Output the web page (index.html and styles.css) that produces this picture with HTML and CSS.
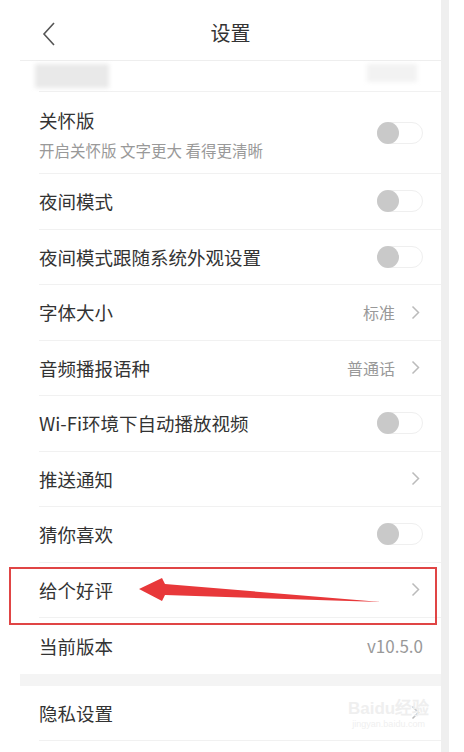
FILE: index.html
```html
<!DOCTYPE html>
<html lang="zh-CN">

<head>
    <meta charset="UTF-8">
    <meta name="viewport" content="width=device-width, initial-scale=1.0">
    <title>设置</title>
    <link rel="stylesheet" href="styles.css">
</head>

<body>
    <div class="frame">
        <div class="screen">
            <div class="header">
                <svg class="back" width="14" height="24" viewBox="0 0 14 24">
                    <path d="M12 1 L2 12 L12 23" fill="none" stroke="#555" stroke-width="1.6" />
                </svg>
                <h1>设置</h1>
            </div>

            <div class="list">
                <div class="row row-hidden">
                    <span class="blur-left"></span>
                    <span class="blur-right"></span>
                </div>

                <div class="row row-tall">
                    <div class="label">
                        <span class="title">关怀版</span>
                        <span class="desc">开启关怀版 文字更大 看得更清晰</span>
                    </div>
                    <span class="switch"></span>
                </div>

                <div class="row">
                    <span class="title">夜间模式</span>
                    <span class="switch"></span>
                </div>

                <div class="row">
                    <span class="title">夜间模式跟随系统外观设置</span>
                    <span class="switch"></span>
                </div>

                <div class="row">
                    <span class="title">字体大小</span>
                    <span class="value">标准 <svg class="arrow" width="9" height="15" viewBox="0 0 9 15"><path d="M1.5 1.5 L7.5 7.5 L1.5 13.5" fill="none" stroke="#bbb" stroke-width="1.5" /></svg></span>
                </div>

                <div class="row">
                    <span class="title">音频播报语种</span>
                    <span class="value">普通话 <svg class="arrow" width="9" height="15" viewBox="0 0 9 15"><path d="M1.5 1.5 L7.5 7.5 L1.5 13.5" fill="none" stroke="#bbb" stroke-width="1.5" /></svg></span>
                </div>

                <div class="row">
                    <span class="title">Wi-Fi环境下自动播放视频</span>
                    <span class="switch"></span>
                </div>

                <div class="row">
                    <span class="title">推送通知</span>
                    <span class="value"><svg class="arrow" width="9" height="15" viewBox="0 0 9 15"><path d="M1.5 1.5 L7.5 7.5 L1.5 13.5" fill="none" stroke="#bbb" stroke-width="1.5" /></svg></span>
                </div>

                <div class="row">
                    <span class="title">猜你喜欢</span>
                    <span class="switch"></span>
                </div>

                <div class="row">
                    <span class="title">给个好评</span>
                    <span class="value"><svg class="arrow" width="9" height="15" viewBox="0 0 9 15"><path d="M1.5 1.5 L7.5 7.5 L1.5 13.5" fill="none" stroke="#bbb" stroke-width="1.5" /></svg></span>
                </div>

                <div class="row row-last">
                    <span class="title">当前版本</span>
                    <span class="version">v10.5.0</span>
                </div>
            </div>

            <div class="gap"></div>

            <div class="list">
                <div class="row">
                    <span class="title">隐私设置</span>
                    <span class="value"><svg class="arrow" width="9" height="15" viewBox="0 0 9 15"><path d="M1.5 1.5 L7.5 7.5 L1.5 13.5" fill="none" stroke="#bbb" stroke-width="1.5" /></svg></span>
                </div>
            </div>
        </div>
        <div class="edge"></div>
    </div>

    <!-- 标注：红框和箭头 -->
    <div class="mark-box"></div>
    <svg class="mark-arrow" width="464" height="752" viewBox="0 0 464 752">
        <polygon points="139,589 162,578 165,584 381,602 165,595 162,601" fill="#e8383a" />
    </svg>

    <div class="watermark">
        <span class="wm-big">Baidu经验</span>
        <span class="wm-small">jingyan.baidu.com</span>
    </div>
</body>
</html>
```

FILE: styles.css
```css
body, html {
    margin: 0;
    padding: 0;
    background: #fff;
    font-family: "Noto Sans CJK SC", "Noto Sans", sans-serif;
    overflow: hidden;
}

.frame {
    display: flex;
    width: 464px;
    height: 752px;
}

.screen {
    width: 441px;
    background: #fff;
}

.edge {
    width: 8px;
    background: #efefef;
}

.header {
    height: 60px;
    display: flex;
    align-items: center;
    justify-content: center;
    position: relative;
    margin-left: 20px;
    border-bottom: 1px solid #eeeeee;
}

.header h1 {
    margin: 0;
    font-size: 20px;
    font-weight: normal;
    color: #333;
    padding-top: 4px;
}

.back {
    position: absolute;
    left: 22px;
    top: 22px;
}

.list {
    margin-left: 39px;
}

.row {
    height: 55.5px;
    display: flex;
    align-items: center;
    justify-content: space-between;
    padding-right: 18px;
    border-bottom: 1px solid #f1f1f1;
    box-sizing: border-box;
}

.row-hidden {
    height: 31px;
    align-items: flex-start;
    padding-top: 3px;
}

.row-tall {
    height: 82px;
}

.row-last {
    border-bottom: none;
}

.blur-left {
    width: 74px;
    height: 24px;
    margin-left: -4px;
    background: #e9e9e9;
    filter: blur(2px);
}

.blur-right {
    width: 50px;
    height: 18px;
    margin-right: 6px;
    background: #f2f2f2;
    filter: blur(2px);
}

.label {
    display: flex;
    flex-direction: column;
    gap: 8px;
    padding-top: 3px;
}

.title {
    font-size: 18.5px;
    color: #333;
    line-height: 24px;
}

.desc {
    font-size: 15.5px;
    color: #999;
    line-height: 20px;
}

.switch {
    width: 46px;
    height: 22px;
    border-radius: 11px;
    border: 1px solid #efefef;
    box-sizing: border-box;
    position: relative;
    background: #fff;
}

.switch::before {
    content: '';
    position: absolute;
    left: -1px;
    top: -1px;
    width: 22px;
    height: 22px;
    border-radius: 50%;
    background: #c9c9c9;
}

.value {
    display: flex;
    align-items: center;
    gap: 16px;
    font-size: 16px;
    color: #999;
    padding-right: 3px;
}

.version {
    font-size: 17px;
    color: #999;
}

.gap {
    height: 12px;
    margin-left: 20px;
    background: #f4f4f4;
}

.mark-box {
    position: absolute;
    left: 9px;
    top: 567px;
    width: 424px;
    height: 54px;
    border: 2px solid #e04545;
}

.mark-arrow {
    position: absolute;
    left: 0;
    top: 0;
    pointer-events: none;
}

.watermark {
    position: absolute;
    left: 348px;
    top: 700px;
    display: flex;
    flex-direction: column;
    align-items: center;
    color: #efefef;
    font-family: "Liberation Sans", sans-serif;
}

.wm-big {
    font-size: 17px;
    font-weight: bold;
    line-height: 18px;
}

.wm-small {
    font-size: 9px;
    line-height: 12px;
}
```
